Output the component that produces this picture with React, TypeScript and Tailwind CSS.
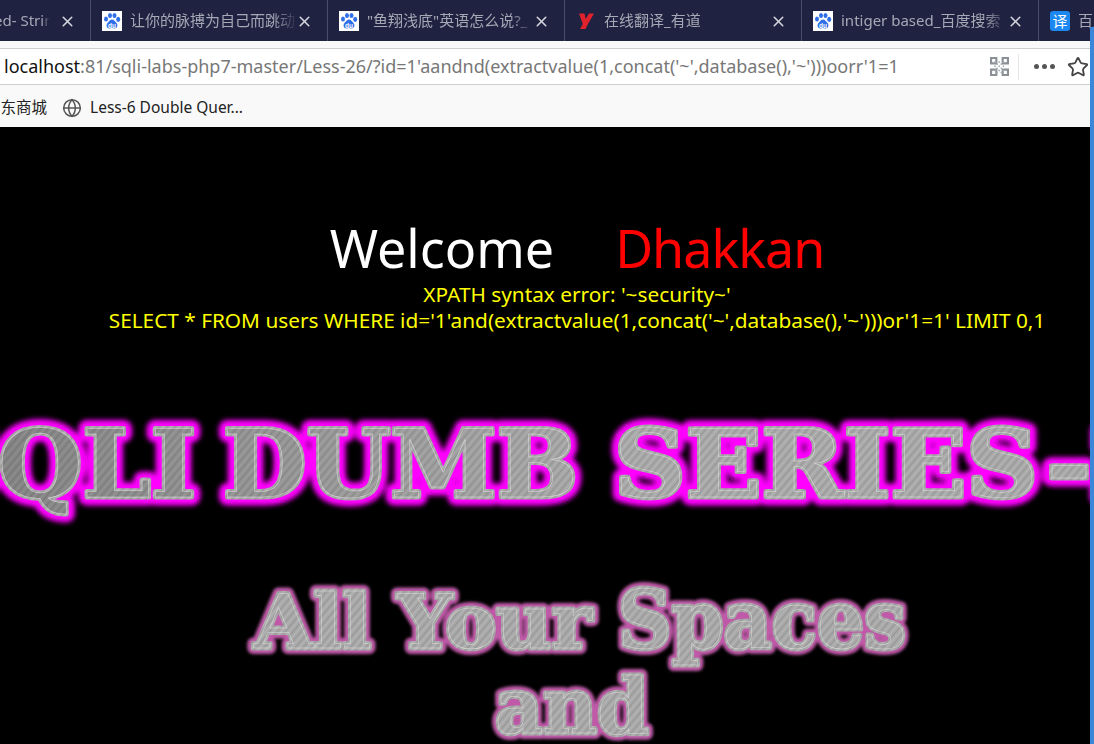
import { Globe, Star, X } from 'lucide-react';

const uiFont = 'font-["Noto_Sans","Noto_Sans_CJK_SC",sans-serif]';

function BaiduIcon() {
  return (
    <svg className="w-5 h-5 shrink-0" viewBox="0 0 20 20">
      <rect width="20" height="20" fill="#fff" />
      <g fill="#2f6fe8">
        <ellipse cx="4" cy="8" rx="2" ry="2.6" />
        <ellipse cx="8" cy="4.5" rx="2" ry="2.6" />
        <ellipse cx="12.5" cy="4.5" rx="2" ry="2.6" />
        <ellipse cx="16.2" cy="8.3" rx="2" ry="2.6" />
        <path d="M10 8.5c2 0 3 2 4.5 3.5 1.600 1.600 1.200 5.500-2 5.500-1 0-1.600-.4-2.500-.4s-1.500.4-2.500.4c-3.200 0-3.600-3.900-2-5.500C7 10.500 8 8.500 10 8.500z" />
      </g>
      <text x="10" y="16.500" textAnchor="middle" fontSize="6.500" fontWeight="700" fill="#fff" fontFamily="Liberation Sans, sans-serif">du</text>
    </svg>
  );
}

function YoudaoIcon() {
  return (
    <svg className="w-5 h-5 shrink-0" viewBox="0 0 20 20">
      <path d="M3 2.500h5.500l1.200 5.500 3.300-5.500h5L12.500 12 9.500 18H4l2.800-5z" fill="#e0222c" />
    </svg>
  );
}

function TranslateIcon() {
  return (
    <span className="w-5 h-5 shrink-0 rounded-[3px] bg-[#1b87f0] text-white text-[15px] leading-5 text-center font-['Noto_Sans_CJK_SC',sans-serif]">译</span>
  );
}

function Tab({ icon, title, first }: { icon?: React.ReactNode; title: string; first?: boolean }) {
  return (
    <div className={`h-full shrink-0 flex items-center border-r border-[#4a4d68] relative ${first ? 'w-[91px]' : 'w-[237px] pl-[11px]'}`}>
      {icon}
      <span className={`text-[15px] text-[#a6a8b6] whitespace-nowrap overflow-hidden [mask-image:linear-gradient(to_right,black_85%,transparent)] ${first ? 'w-[56px] -ml-[6px] shrink-0' : 'ml-2 w-[168px]'}`}>
        {title}
      </span>
      <X className="absolute right-[14px] top-[13px] w-[17px] h-[17px] text-[#d5d6dd]" strokeWidth={2.2} />
    </div>
  );
}

function QrIcon() {
  const cells = ['0,0', '2,2', '4,0', '6,2', '8,0', '0,4', '4,4', '8,4', '2,6', '6,6', '0,8', '4,8', '8,8', '2,10', '6,10'];
  return (
    <svg className="w-[19px] h-[19px]" viewBox="0 0 18 18" fill="#8b9096">
      <path d="M0 0h7v7H0zM2 2v3h3V2zM11 0h7v7h-7zM13 2v3h3V2zM0 11h7v7H0zM2 13v3h3v-3zM11 11h7v7h-7zM13 13v3h3v-3z" fillRule="evenodd" />
      {cells.map((c) => {
        const [x, y] = c.split(',').map(Number);
        return <rect key={c} x={x + 4} y={y + 4} width="1.500" height="1.500" fill="#aab0b5" />;
      })}
    </svg>
  );
}

interface LogoWord {
  text: string;
  x: number;
  y: number;
  len: number;
  size: number;
}

const bigWords: LogoWord[] = [
  { text: 'SQLI', x: -72, y: 497, len: 268, size: 94 },
  { text: 'DUMB', x: 223, y: 497, len: 355, size: 94 },
  { text: 'SERIES', x: 614, y: 497, len: 424, size: 94 },
  { text: '-26', x: 1046, y: 497, len: 200, size: 94 },
];

const smallWords: LogoWord[] = [
  { text: 'All Your', x: 254, y: 648, len: 338, size: 74 },
  { text: 'Spaces', x: 618, y: 648, len: 288, size: 80 },
  { text: 'and', x: 495, y: 733, len: 154, size: 76 },
];

function WordLayer({ words, ...rest }: { words: LogoWord[] } & React.SVGProps<SVGGElement>) {
  return (
    <g {...rest}>
      {words.map((w) => (
        <text key={w.text} x={w.x} y={w.y} textLength={w.len} lengthAdjust="spacingAndGlyphs" fontSize={w.size} fontWeight="700" fontFamily="DejaVu Serif, serif">
          {w.text}
        </text>
      ))}
    </g>
  );
}

// the banner picture of the page: brushed metal letters with a coloured glow
function Banner() {
  return (
    <svg className="block w-[1154px] h-[344px] shrink-0" viewBox="0 400 1154 344">
      <defs>
        <pattern id="metal" width="6" height="6" patternUnits="userSpaceOnUse" patternTransform="rotate(-50)">
          <rect width="6" height="6" fill="#a8a8a8" />
          <rect width="6" height="1" fill="#969696" />
          <rect y="3" width="6" height="1" fill="#b6b6b6" />
        </pattern>
        <linearGradient id="shade" gradientUnits="userSpaceOnUse" x1="0" y1="0" x2="620" y2="0">
          <stop offset="0" stopColor="#000" stopOpacity="0.22" />
          <stop offset="1" stopColor="#000" stopOpacity="0" />
        </linearGradient>
        <filter id="blur-big" x="-10%" y="-30%" width="120%" height="160%">
          <feGaussianBlur stdDeviation="2.500" />
        </filter>
        <filter id="blur-small" x="-10%" y="-30%" width="120%" height="160%">
          <feGaussianBlur stdDeviation="1.500" />
        </filter>
      </defs>
      <WordLayer words={bigWords} fill="#ff00ff" stroke="#ff00ff" strokeWidth={17} strokeLinejoin="round" filter="url(#blur-big)" />
      <WordLayer words={bigWords} fill="url(#metal)" stroke="url(#metal)" strokeWidth={5} strokeLinejoin="round" />
      <WordLayer words={bigWords} fill="url(#shade)" stroke="none" />
      <WordLayer words={bigWords} fill="none" stroke="#eeeeee" strokeWidth={0.5} opacity={0.7} />
      <WordLayer words={smallWords} fill="#c05aa8" stroke="#c05aa8" strokeWidth={12} strokeLinejoin="round" filter="url(#blur-small)" />
      <WordLayer words={smallWords} fill="url(#metal)" stroke="url(#metal)" strokeWidth={5} strokeLinejoin="round" />
      <WordLayer words={smallWords} fill="none" stroke="#eeeeee" strokeWidth={0.5} opacity={0.7} />
    </svg>
  );
}

export default function App() {
  return (
    <div className={`relative w-[1094px] h-[744px] overflow-hidden flex flex-col bg-black ${uiFont}`}>
      {/* Tab strip */}
      <div className="h-[41px] shrink-0 bg-[#1f2240] flex items-center">
        <Tab first title="ed- Strin" />
        <Tab icon={<BaiduIcon />} title="让你的脉搏为自己而跳动" />
        <Tab icon={<BaiduIcon />} title={'"鱼翔浅底"英语怎么说?_'} />
        <Tab icon={<YoudaoIcon />} title="在线翻译_有道" />
        <Tab icon={<BaiduIcon />} title="intiger based_百度搜索" />
        <Tab icon={<TranslateIcon />} title="百度翻译" />
      </div>

      {/* Address bar */}
      <div className="h-[44px] shrink-0 bg-[#f9f9f9] pt-[7px] pb-0">
        <div className="h-[37px] bg-white border-y border-[#cfcfcf] flex items-center pl-1">
          <span className="w-[970px] shrink-0 text-[18px] text-[#777] whitespace-nowrap overflow-hidden">
            <span className="text-[#111]">localhost</span>:81/sqli-labs-php7-master/Less-26/?id=1'aandnd(extractvalue(1,concat('~',database(),'~')))oorr'1=1
          </span>
          <div className="ml-[16px] flex items-center">
            <QrIcon />
            <div className="w-px h-[26px] bg-[#e5e5e5] ml-[9px]" />
            <div className="ml-[15px] flex items-center gap-[3px]">
              <span className="w-[5px] h-[5px] rounded-full bg-[#555]" />
              <span className="w-[5px] h-[5px] rounded-full bg-[#555]" />
              <span className="w-[5px] h-[5px] rounded-full bg-[#555]" />
            </div>
            <Star className="ml-[12px] w-[22px] h-[22px] text-[#444]" strokeWidth={2} />
          </div>
        </div>
      </div>

      {/* Bookmarks */}
      <div className="h-[42px] shrink-0 bg-[#f9f9f9] flex items-center pt-[4px] text-[15.5px] text-[#222]">
        <span className="-ml-[15px] shrink-0 whitespace-nowrap">京东商城</span>
        <Globe className="ml-[15px] w-[20px] h-[20px] text-[#555]" strokeWidth={1.8} />
        <span className="ml-2">Less-6 Double Quer...</span>
      </div>

      {/* Page */}
      <div className="flex-1 min-h-0 overflow-hidden bg-black">
        <div className="w-[1154px] flex flex-col items-center text-center">
          <div className="mt-[88px] h-[66px] text-[52px] leading-[66px] flex whitespace-nowrap">
            <span className="text-white">Welcome</span>
            <span className="ml-[61px] text-[#ff0000] tracking-[-1px]">Dhakkan</span>
          </div>
          <div className="text-[20.800px] leading-[26px] text-[#ffff00] whitespace-nowrap">XPATH syntax error: '~security~'</div>
          <div className="text-[20.800px] leading-[26px] text-[#ffff00] whitespace-nowrap">SELECT * FROM users WHERE id='1'and(extractvalue(1,concat('~',database(),'~')))or'1=1' LIMIT 0,1</div>
          <div className="mt-[67px]">
            <Banner />
          </div>
        </div>
      </div>

      {/* Overlay scrollbar */}
      <div className="absolute right-0 top-[27px] bottom-0 w-[4px] bg-[#3a87d9]" />
    </div>
  );
}
